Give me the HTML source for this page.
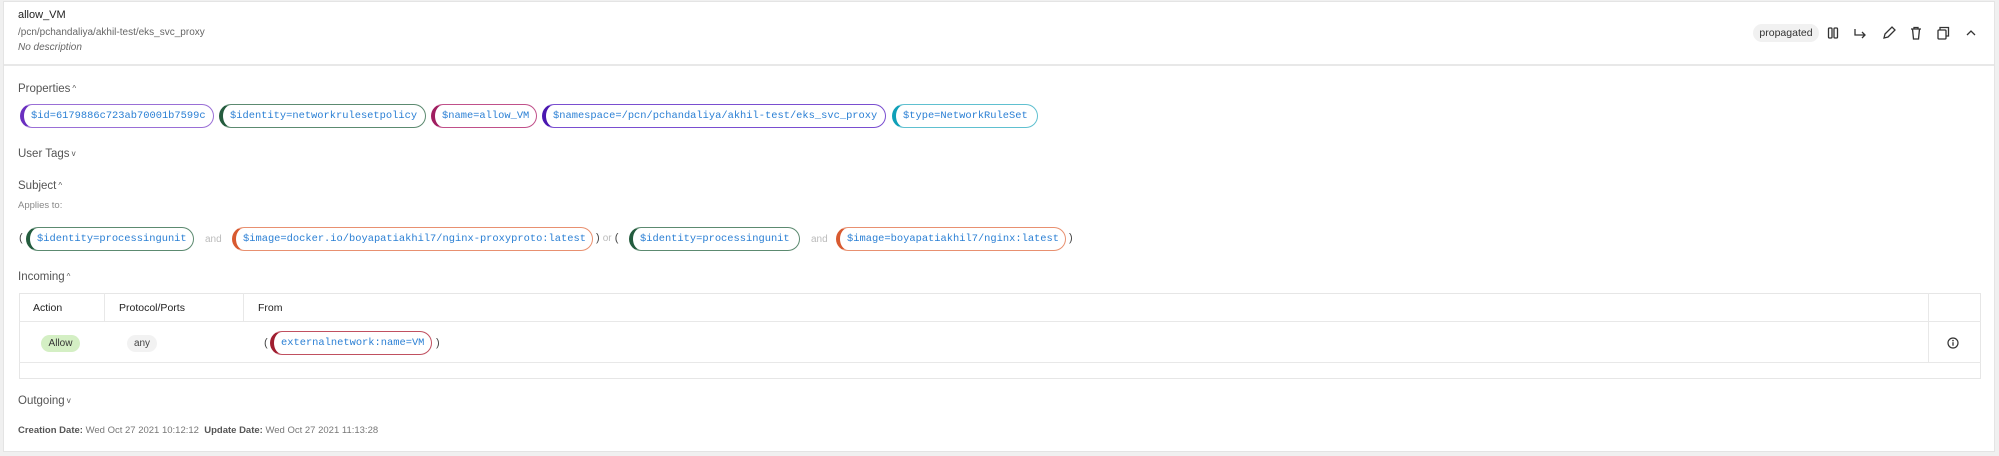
<!DOCTYPE html>
<html><head><meta charset="utf-8"><style>
*{box-sizing:border-box;margin:0;padding:0}
body{width:1999px;height:456px;background:#f0f0f0;font-family:"Liberation Sans",sans-serif;position:relative;overflow:hidden;color:#333}
.card{position:absolute;left:3px;top:1px;width:1992px;height:451px;background:#fff;border:1px solid #e4e4e4}
.a{position:absolute;white-space:nowrap}
.h{font-size:11.5px;color:#555}
.h i{font-style:normal;font-size:8px;vertical-align:1px;margin-left:2px}
.chip{position:absolute;height:24px;border:1px solid;border-left-width:4px;border-radius:12px;font-family:"Liberation Mono",monospace;font-size:10.4px;color:#2a7fd4;line-height:22px;padding-left:7px;white-space:nowrap;overflow:hidden}
.sm{font-size:10px;color:#bbb}
.line{position:absolute;background:#e8e8e8}
</style></head><body>
<div class="card"></div>
<div class="a" style="left:18px;top:9px;font-size:11px;color:#222">allow_VM</div>
<div class="a" style="left:18px;top:27px;font-size:10px;color:#666">/pcn/pchandaliya/akhil-test/eks_svc_proxy</div>
<div class="a" style="left:18px;top:42px;font-size:10px;color:#666;font-style:italic">No description</div>
<div class="line" style="left:4px;top:64px;width:1990px;height:2px"></div>

<div class="a" style="left:1753px;top:24px;width:66px;height:18px;border-radius:9px;background:#f1f1f1;font-size:10.5px;color:#333;text-align:center;line-height:18px">propagated</div>
<svg class="a" style="left:1820px;top:24px" width="170" height="18" viewBox="0 0 170 18" fill="none" stroke="#333" stroke-width="1.3">
<rect x="8.5" y="4" width="3.5" height="10" rx="1"/><rect x="14" y="4" width="3.5" height="10" rx="1"/>
<path d="M35 5v6h10M42 8l3 3-3 3"/>
<path d="M64 14l1-4 7-7 3 3-7 7z"/>
<path d="M91 5h10M94 5V3.5h4V5M92.5 5l1 10h5l1-10"/>
<rect x="118" y="6" width="8" height="9" rx="1"/><path d="M120 6V3.5h8.5v8.5H126"/>
<path d="M147 11l4-4 4 4"/>
</svg>

<div class="a h" style="left:18px;top:83px">Properties<i>^</i></div>
<div class="chip" style="left:20px;top:104px;width:194px;border-color:#9a6fd6;border-left-color:#6a2fc0">$id=6179886c723ab70001b7599c</div>
<div class="chip" style="left:219px;top:104px;width:207px;border-color:#5c8a70;border-left-color:#245c3e">$identity=networkrulesetpolicy</div>
<div class="chip" style="left:431px;top:104px;width:106px;border-color:#c0508a;border-left-color:#a01e60">$name=allow_VM</div>
<div class="chip" style="left:542px;top:104px;width:344px;border-color:#7a4ed0;border-left-color:#4a18b0">$namespace=/pcn/pchandaliya/akhil-test/eks_svc_proxy</div>
<div class="chip" style="left:892px;top:104px;width:146px;border-color:#60c0d0;border-left-color:#10a0b8">$type=NetworkRuleSet</div>

<div class="a h" style="left:18px;top:148px">User Tags<i>v</i></div>
<div class="a h" style="left:18px;top:180px">Subject<i>^</i></div>
<div class="a" style="left:18px;top:200px;font-size:9.5px;color:#888">Applies to:</div>
<div class="a" style="left:19px;top:232px;font-size:11px;color:#444">(</div>
<div class="chip" style="left:26px;top:227px;width:168px;border-color:#5c8a70;border-left-color:#245c3e">$identity=processingunit</div>
<div class="a sm" style="left:205px;top:234px">and</div>
<div class="chip" style="left:232px;top:227px;width:361px;border-color:#e89070;border-left-color:#d85a30">$image=docker.io/boyapatiakhil7/nginx-proxyproto:latest</div>
<div class="a" style="left:596px;top:232px;font-size:11px;color:#444">) <span style="color:#bbb;font-size:10px">or</span> (</div>
<div class="chip" style="left:629px;top:227px;width:171px;border-color:#5c8a70;border-left-color:#245c3e">$identity=processingunit</div>
<div class="a sm" style="left:811px;top:234px">and</div>
<div class="chip" style="left:836px;top:227px;width:230px;border-color:#e89070;border-left-color:#d85a30">$image=boyapatiakhil7/nginx:latest</div>
<div class="a" style="left:1069px;top:232px;font-size:11px;color:#444">)</div>

<div class="a h" style="left:18px;top:271px">Incoming<i>^</i></div>
<div class="a" style="left:19px;top:293px;width:1962px;height:86px;border:1px solid #e6e6e6"></div>
<div class="line" style="left:19px;top:321px;width:1962px;height:1px"></div>
<div class="line" style="left:19px;top:362px;width:1962px;height:1px"></div>
<div class="line" style="left:104px;top:293px;width:1px;height:29px"></div>
<div class="line" style="left:243px;top:293px;width:1px;height:29px"></div>
<div class="line" style="left:1928px;top:293px;width:1px;height:70px"></div>
<div class="a" style="left:33px;top:302px;font-size:10.5px;color:#222">Action</div>
<div class="a" style="left:119px;top:302px;font-size:10.5px;color:#222">Protocol/Ports</div>
<div class="a" style="left:258px;top:302px;font-size:10.5px;color:#222">From</div>
<div class="a" style="left:41px;top:335px;width:39px;height:17px;border-radius:9px;background:#d4efc4;font-size:10px;color:#333;text-align:center;line-height:17px">Allow</div>
<div class="a" style="left:127px;top:335px;width:30px;height:17px;border-radius:9px;background:#f2f2f2;font-size:10px;color:#444;text-align:center;line-height:17px">any</div>
<div class="a" style="left:264px;top:337px;font-size:11px;color:#444">(</div>
<div class="chip" style="left:270px;top:331px;width:162px;border-color:#c05060;border-left-color:#a01e30">externalnetwork:name=VM</div>
<div class="a" style="left:436px;top:337px;font-size:11px;color:#444">)</div>
<svg class="a" style="left:1947px;top:337px" width="12" height="12" viewBox="0 0 12 12"><circle cx="6" cy="6" r="5" fill="none" stroke="#333" stroke-width="1.2"/><path d="M6 5.2v3.5" stroke="#333" stroke-width="1.3"/><circle cx="6" cy="3.6" r=".8" fill="#333"/></svg>

<div class="a h" style="left:18px;top:395px">Outgoing<i>v</i></div>
<div class="a" style="left:18px;top:425px;font-size:9.5px;color:#777"><b style="color:#555">Creation Date:</b> Wed Oct 27 2021 10:12:12 &nbsp;<b style="color:#555">Update Date:</b> Wed Oct 27 2021 11:13:28</div>
</body></html>
